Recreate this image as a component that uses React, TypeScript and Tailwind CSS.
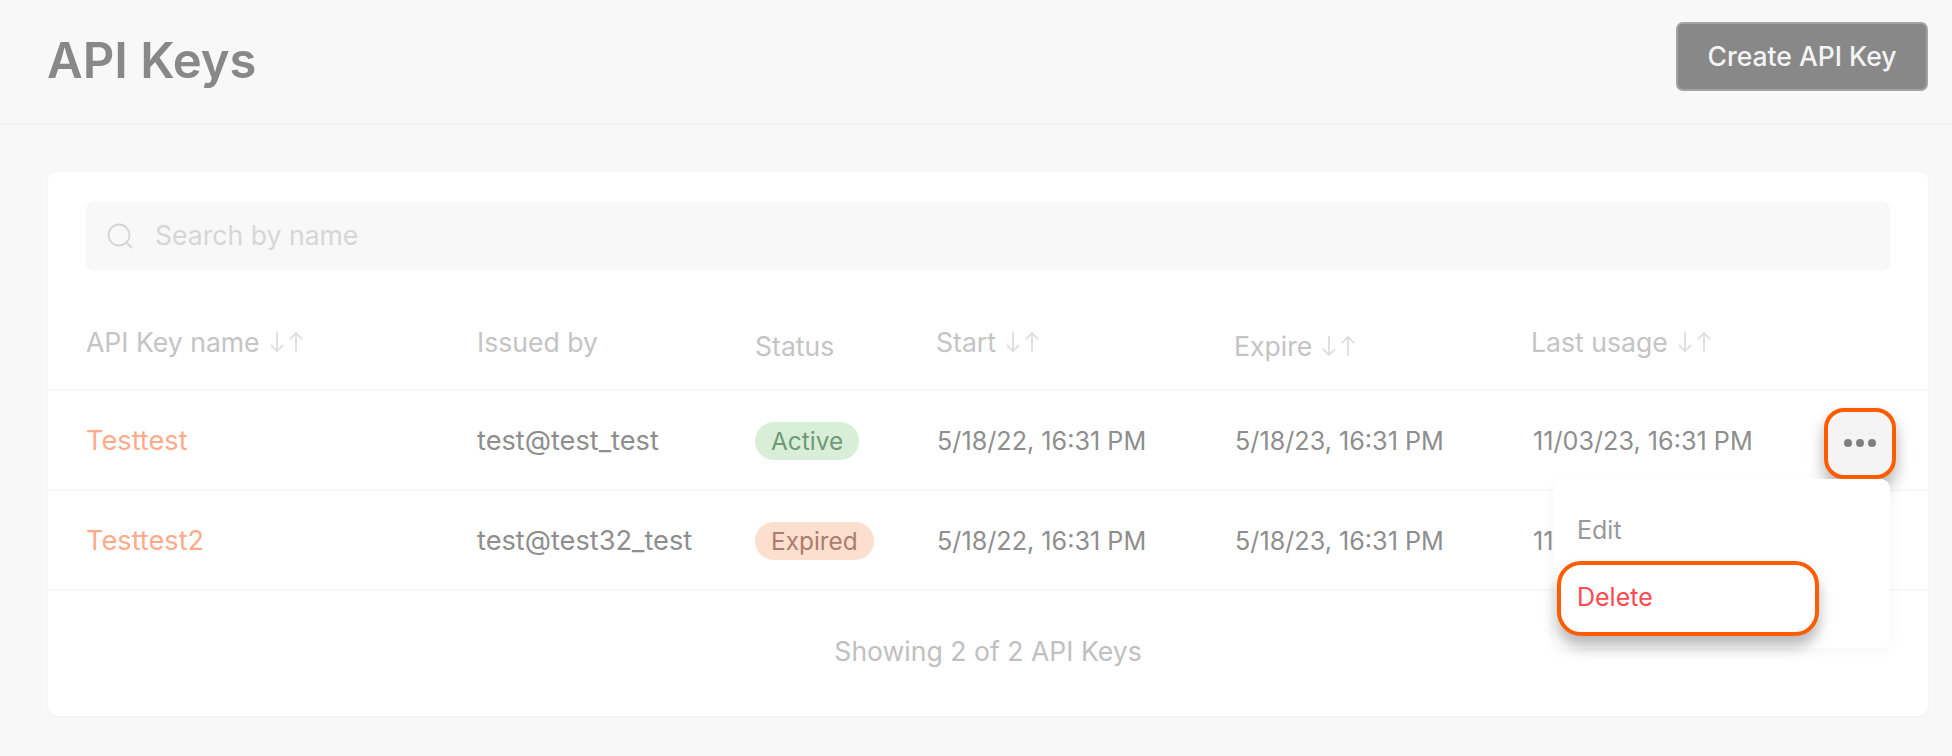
import React from "react";

const cols = "grid grid-cols-[391px_278px_181px_298px_297px_1fr]";

function Sort() {
  return (
    <svg width="35" height="22" viewBox="0 0 35 22" fill="none" stroke="#dcdcdc" strokeWidth="1.7" className="ml-[9px] shrink-0">
      <path d="M8 1v19M2 14l6 6 6-6" />
      <path d="M27 21V2M21 8l6-6 6 6" />
    </svg>
  );
}

function Head({ label, sort, low }: { label: string; sort?: boolean; low?: boolean }) {
  return (
    <div className={low ? "flex items-center pt-2" : "flex items-center"}>
      <span>{label}</span>
      {sort && <Sort />}
    </div>
  );
}

function Row({ name, by, status, exp, children }: { name: string; by: string; status: string; exp: string; children?: React.ReactNode }) {
  const active = status === "Active";
  return (
    <div className={`${cols} h-[100px] items-center px-[38px] pt-[3px] border-b-2 border-[#f8f8f8] text-[25.2px] text-[#8e8e8e]`}>
      <div className="text-[27.2px] text-[#ffab8a]">{name}</div>
      <div className="text-[27.2px]">{by}</div>
      <div>
        <span className={active ? "inline-flex h-[38px] items-center rounded-[19px] bg-[#d9eed6] px-[16px] text-[24.4px] text-[#6f9a78]" : "inline-flex h-[38px] items-center rounded-[19px] bg-[#fddfcf] px-[16px] text-[24.4px] text-[#ab7d6e]"}>
          {status}
        </span>
      </div>
      <div className="pl-[1px]">5/18/22, 16:31 PM</div>
      <div className="pl-[1px]">{exp}</div>
      <div className="relative flex h-[40px] items-center">
        <span className="whitespace-nowrap pl-[2px]">11/03/23, 16:31 PM</span>
        {children}
      </div>
    </div>
  );
}

export default function App() {
  return (
    <div className="min-h-[756px] bg-[#f8f8f8] font-['Inter',sans-serif] overflow-hidden">
      <header className="flex h-[125px] items-center justify-between border-b-2 border-[#f3f3f3] pl-[47px] pr-[24px]">
        <h1 className="text-[49px] font-semibold text-[#888888] pb-[2px]">API Keys</h1>
        <button className="mb-[11px] flex h-[69px] w-[252px] items-center justify-center rounded-[7px] border-2 border-[#a3a3a3] bg-[#888888] pt-[2px] text-[26.5px] font-medium text-[#f4f4f4]">
          Create API Key
        </button>
      </header>
      <main className="pl-[48px] pr-[24px] pt-[47px]">
        <section className="rounded-[9px] bg-white shadow-[0_1px_3px_rgba(0,0,0,0.03)]">
          <div className="px-[38px] pt-[30px]">
            <div className="flex h-[68px] w-[1804px] items-center rounded-[7px] bg-[#f8f8f8] pl-[21px] text-[26.6px] text-[#d6d6d6]">
              <svg width="26" height="26" viewBox="0 0 26 26" fill="none" stroke="#d4d4d4" strokeWidth="1.8">
                <circle cx="12" cy="12" r="10.5" />
                <path d="M20 20l5 5" />
              </svg>
              <span className="ml-[22px]">Search by name</span>
            </div>
          </div>
          <div className={`${cols} h-[121px] items-center border-b-2 border-[#f8f8f8] px-[38px] pt-[26px] text-[26.6px] text-[#c4c4c4]`}>
            <Head label="API Key name" sort />
            <Head label="Issued by" />
            <Head label="Status" low />
            <Head label="Start" sort />
            <Head label="Expire" sort low />
            <Head label="Last usage" sort />
          </div>
          <Row name="Testtest" by="test@test_test" status="Active" exp="5/18/23, 16:31 PM">
            <button className="absolute left-[293px] top-[-14px] flex h-[71px] w-[72px] items-center justify-center gap-[4px] rounded-[20px] border-4 border-[#ff5c00] bg-[#f4f4f4] shadow-[0_10px_16px_rgba(0,0,0,0.3)]">
              <span className="h-[8px] w-[8px] rounded-full bg-[#808080]" />
              <span className="h-[8px] w-[8px] rounded-full bg-[#808080]" />
              <span className="h-[8px] w-[8px] rounded-full bg-[#808080]" />
            </button>
            <div className="absolute left-[23px] top-[57px] z-10 h-[169px] w-[336px] rounded-[9px] bg-white pl-[3px] text-[25px] shadow-[0_4px_16px_rgba(0,0,0,0.04)]">
              <div className="flex h-[82px] items-center pl-[20px] pt-[22px] text-[#999999]">Edit</div>
              <div className="flex h-[75px] w-[262px] items-center rounded-[24px] border-4 border-[#ff5c00] bg-white pl-[16px] text-[#ff4a4f] shadow-[0_10px_14px_rgba(0,0,0,0.28)]">
                Delete
              </div>
            </div>
          </Row>
          <Row name="Testtest2" by="test@test32_test" status="Expired" exp="5/18/23, 16:31 PM" />
          <div className="flex h-[125px] items-center justify-center pb-[4px] text-[26.6px] text-[#c0c0c0]">
            Showing 2 of 2 API Keys
          </div>
        </section>
      </main>
    </div>
  );
}
